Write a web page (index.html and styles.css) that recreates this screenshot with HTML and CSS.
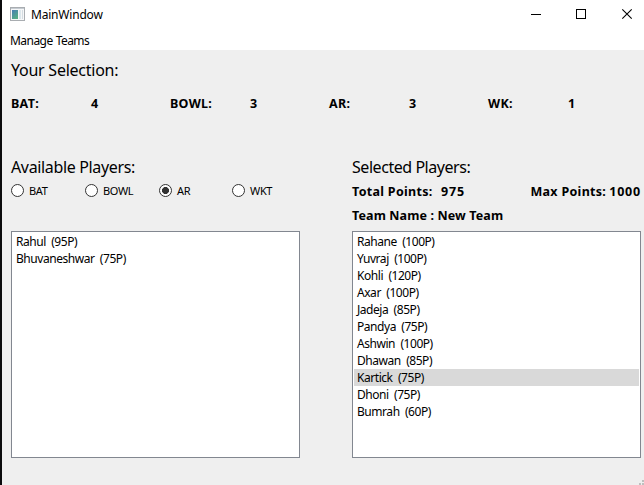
FILE: index.html
```html
<!DOCTYPE html>
<html lang="en">
<head>
<meta charset="utf-8">
<title>MainWindow</title>
<link rel="stylesheet" href="styles.css">
</head>
<body>
<div class="window">
  <header class="titlebar">
    <svg class="app-icon" width="15" height="14" viewBox="0 0 15 14">
      <defs><linearGradient id="g" x1="0" y1="0" x2="0.6" y2="1"><stop offset="0" stop-color="#477db4"/><stop offset="1" stop-color="#55ad85"/></linearGradient></defs>
      <rect x=".5" y=".5" width="14" height="13" fill="#f6f7f8" stroke="#a9adb1"/>
      <rect x="1" y="1" width="13" height="1" fill="#c5cbd1"/>
      <rect x="2" y="3" width="6" height="9" fill="url(#g)"/>
      <rect x="9" y="3" width="2" height="9" fill="#dce7ec"/>
      <rect x="12" y="3" width="1" height="9" fill="#d4dce1"/>
    </svg>
    <span class="title">MainWindow</span>
    <svg class="controls" width="104" height="12" viewBox="0 0 104 12" fill="none" stroke="#000">
      <path d="M0 6.500H10M45.500 1.500h9v9h-9z" shape-rendering="crispEdges"/>
      <path d="M91.300 1.300l9.400 9.400M100.700 1.300l-9.400 9.400" stroke-width="1.100"/>
    </svg>
  </header>
  <nav class="menubar"><span class="menu">Manage Teams</span></nav>
  <main>
    <h2 class="h-selection">Your Selection:</h2>
    <div class="counts">
      <span class="bat">BAT:</span><span>4</span><span class="bowl">BOWL:</span><span>3</span><span class="ar">AR:</span><span>3</span><span class="wk">WK:</span><span>1</span>
    </div>
    <div class="panels">
      <section class="available">
        <h2 class="h-available">Available Players:</h2>
        <div class="radios">
          <label><i class="radio"></i><span>BAT</span></label>
          <label><i class="radio"></i><span>BOWL</span></label>
          <label><i class="radio checked"></i><span>AR</span></label>
          <label><i class="radio"></i><span>WKT</span></label>
        </div>
        <ul class="list">
          <li>Rahul  (95P)</li>
          <li>Bhuvaneshwar  (75P)</li>
        </ul>
      </section>
      <section class="selected">
        <h2 class="h-selected">Selected Players:</h2>
        <div class="points"><span class="total">Total Points:</span><span class="value">975</span><span class="max">Max Points:</span><span class="limit">1000</span></div>
        <div class="team"><span>Team Name : New Team</span></div>
        <ul class="list">
          <li>Rahane  (100P)</li>
          <li>Yuvraj  (100P)</li>
          <li>Kohli  (120P)</li>
          <li>Axar  (100P)</li>
          <li>Jadeja  (85P)</li>
          <li>Pandya  (75P)</li>
          <li>Ashwin  (100P)</li>
          <li>Dhawan  (85P)</li>
          <li class="current">Kartick  (75P)</li>
          <li>Dhoni  (75P)</li>
          <li>Bumrah  (60P)</li>
        </ul>
      </section>
    </div>
    <svg class="grip" width="5" height="5" viewBox="0 0 5 5" fill="#bfbfbf"><path d="M3 0h2v2H3zM0 3h2v2H0zM3 3h2v2H3z"/></svg>
  </main>
</div>
</body>
</html>
```
FILE: styles.css
```css
* { box-sizing: border-box; }
body { margin: 0; background: #fff; color: #000; font: 12px/17px "Noto Sans", sans-serif; overflow: hidden; }
.window { width: 644px; height: 485px; border-left: 2px solid #0b0b0d; display: flex; flex-direction: column; }
.titlebar { height: 30px; display: flex; align-items: center; padding: 0 9px 2px 8px; }
.title { margin-left: 6px; letter-spacing: -0.2px; line-height: 18px; padding-top: 1px; }
.controls { margin-left: auto; }
.menubar { height: 20px; padding: 2px 0 0 8px; letter-spacing: -0.55px; word-spacing: 0.5px; }
main { flex: 1; background: #efefef; padding: 9px 3px 0 9px; position: relative; }
h2 { margin: 0; font-size: 16px; font-weight: 400; line-height: 22px; height: 22px; letter-spacing: -0.35px; white-space: nowrap; }
.h-selection { letter-spacing: -0.25px; }
.h-selected { letter-spacing: -0.45px; }
.counts, .points, .team { font-size: 12.5px; font-weight: 700; height: 17px; letter-spacing: 0.3px; }
.counts { display: grid; grid-template-columns: 80px 79px 80px 79px 80px 79px 80px 60px; margin-top: 14px; }
.panels { display: flex; gap: 52px; margin-top: 44px; }
section { width: 289px; display: flex; flex-direction: column; }
.radios { display: grid; grid-template-columns: 74px 74px 73px 68px; height: 17px; margin-top: 4px; font-size: 11px; letter-spacing: -0.35px; }
label { display: flex; align-items: center; gap: 5px; }
.radio { width: 13px; height: 13px; border: 1px solid #333; border-radius: 50%; background: #fff; }
.checked { background: radial-gradient(circle, #333 0 3.2px, #fff 3.8px); }
.points { display: flex; margin-top: 5px; white-space: nowrap; }
.total { width: 89px; }
.value, .limit { letter-spacing: 0.8px; }
.max { margin-left: auto; }
.limit { margin: 0 0 0 3px; }
.team { margin-top: 7px; white-space: nowrap; letter-spacing: 0.12px; }
.list { list-style: none; margin: 0; padding: 1px; height: 227px; border: 1px solid #828790; background: #fff; letter-spacing: -0.45px; }
.available .list { margin-top: 32px; }
.selected .list { margin-top: 7px; }
li { height: 17px; padding-left: 3px; white-space: pre; }
.current { background: #d9d9d9; }
.grip { position: absolute; right: 0; bottom: 0; }
```
